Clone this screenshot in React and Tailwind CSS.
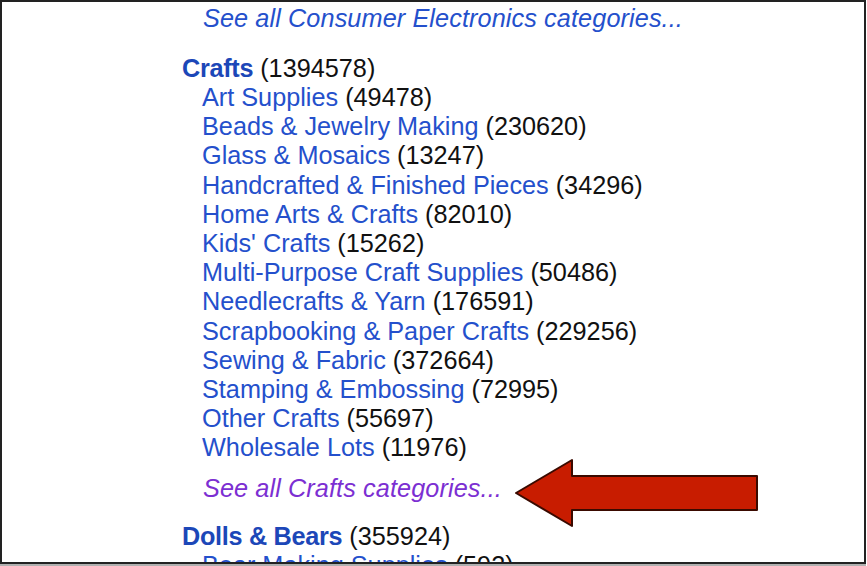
import React from 'react';

const crafts = [
  ['Art Supplies', '49478'],
  ['Beads & Jewelry Making', '230620'],
  ['Glass & Mosaics', '13247'],
  ['Handcrafted & Finished Pieces', '34296'],
  ['Home Arts & Crafts', '82010'],
  ["Kids' Crafts", '15262'],
  ['Multi-Purpose Craft Supplies', '50486'],
  ['Needlecrafts & Yarn', '176591'],
  ['Scrapbooking & Paper Crafts', '229256'],
  ['Sewing & Fabric', '372664'],
  ['Stamping & Embossing', '72995'],
  ['Other Crafts', '55697'],
  ['Wholesale Lots', '11976'],
];

const Arrow = () => (
  <svg
    className="absolute left-[510px] top-[454px]"
    width="256"
    height="80"
    viewBox="510 454 256 80"
  >
    <polygon
      points="516,493 572,460 572,476 757,476 757,510 572,510 572,526"
      fill="#c81c00"
      stroke="#3a0a00"
      strokeWidth="2"
      strokeLinejoin="round"
    />
  </svg>
);

export default function App() {
  return (
    <div className="relative w-[867px] h-[566px] bg-white overflow-hidden">
      <div
        className="w-[866px] h-[564px] border-2 border-[#222] overflow-hidden shadow-[0_2px_0_#b0b0b0] text-[25.25px] leading-[29.2px]"
        style={{ fontFamily: '"Liberation Sans", Arial, sans-serif' }}
      >
        <div className="pl-[180px] pt-[1.5px]">
          <div className="pl-[21px] italic tracking-[0.1px] text-[#2450cc]">See all Consumer Electronics categories...</div>

          <div className="mt-[21px]">
            <span className="font-bold tracking-[-0.3px] text-[#1c47b8]">Crafts</span>{' '}
            <span className="text-[#111]">(1394578)</span>
          </div>
          <div className="pl-[20px]">
            {crafts.map(([name, count]) => (
              <div key={name}>
                <span className="text-[#2450cc]">{name}</span>{' '}
                <span className="text-[#111]">({count})</span>
              </div>
            ))}
          </div>
          <div className="mt-[11px] pl-[21px] italic tracking-[0.1px] text-[#7c2fd2]">See all Crafts categories...</div>

          <div className="mt-[19px]">
            <span className="font-bold tracking-[-0.3px] text-[#1c47b8]">Dolls &amp; Bears</span>{' '}
            <span className="text-[#111]">(355924)</span>
          </div>
          <div className="pl-[20px]">
            <span className="text-[#2450cc]">Bear Making Supplies</span>{' '}
            <span className="text-[#111]">(592)</span>
          </div>
        </div>
      </div>
      <Arrow />
    </div>
  );
}
